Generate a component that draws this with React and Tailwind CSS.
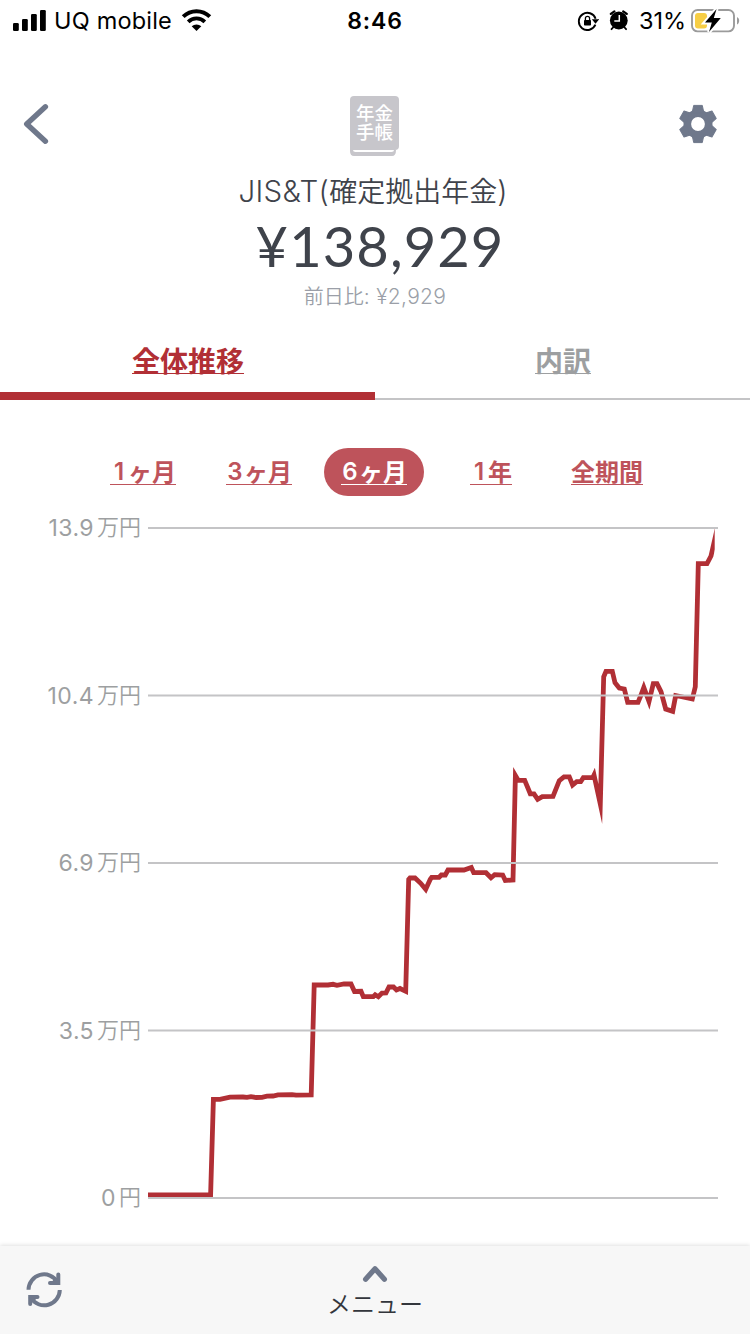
import React, { useState } from 'react';

const TABS = [
  { id: 'total', label: '全体推移' },
  { id: 'detail', label: '内訳' },
];

const RANGES = [
  { id: '1m', num: '1', label: 'ヶ月', box: 'w-[100px] mr-4' },
  { id: '3m', num: '3', label: 'ヶ月', box: 'w-[100px] mr-[15px]' },
  { id: '6m', num: '6', label: 'ヶ月', box: 'w-[100px] mr-4' },
  { id: '1y', num: '1', label: '年', box: 'w-[102px] mr-[15px]' },
  { id: 'all', num: '', label: '全期間', box: 'w-[100px]' },
];

const Y_LABELS = [
  { num: '13.9', unit: '万円' },
  { num: '10.4', unit: '万円' },
  { num: '6.9', unit: '万円' },
  { num: '3.5', unit: '万円' },
  { num: '0', unit: '円' },
];

const GRID_LINES = [528, 695.5, 863, 1030.5, 1198];

const POINTS = [
  [148, 1195], [210.6, 1195], [213.4, 1099.4], [220, 1099.4], [230, 1097.2], [243, 1097], [247, 1097.4],
  [251, 1096.6], [256, 1097.5], [262, 1097.3], [267, 1096.2], [273, 1096], [278, 1094.8], [292, 1094.6],
  [296, 1095.2], [311.2, 1095], [314.2, 985], [328, 985], [333, 984.3], [337, 985.3], [344, 984],
  [351, 984], [354.5, 991.5], [361, 991.3], [363.3, 996.7], [373.3, 996.7], [375.2, 994.8], [378.3, 996.7],
  [382, 993], [386, 992.8], [389, 987], [393.5, 987], [396.5, 990], [400, 988.5], [405.7, 991.3],
  [408.7, 879.5], [410, 878], [415, 878], [420.7, 883.3], [425.7, 889.3], [430.3, 879.3], [431.7, 877.4],
  [439, 877.4], [441.3, 875], [445.3, 875], [448, 870], [464, 870], [471.3, 867.4], [473.7, 872.7],
  [486, 872.7], [491, 877.8], [494.7, 874.7], [502.7, 875], [505.3, 880.5], [513, 880], [515.4, 775.5],
  [518.3, 780.4], [524.7, 780.4], [530.3, 793.8], [534, 793.8], [537.7, 799.3], [542.3, 796.7],
  [553, 796.3], [559.3, 780.7], [564, 776.9], [569.3, 776.9], [572.6, 785], [576.7, 781.7], [580.7, 781.7],
  [583.3, 777.7], [592.7, 777.7], [594, 775], [600.3, 804], [603.7, 676.7], [606, 671.3], [612.3, 671.3],
  [615, 682.7], [619.3, 688], [624.3, 689], [627.7, 702.3], [638, 702.3], [641, 695], [643.8, 687.5],
  [649, 701.5], [653.3, 683.7], [657, 683.7], [661, 691.7], [665.7, 709], [672.7, 711.3], [675.7, 695.5],
  [692.3, 699], [695.3, 686.7], [698.3, 563.7], [707, 563.7], [711, 556], [718, 525],
];

function StatusBar() {
  return (
    <div className="h-10 shrink-0 grid grid-cols-[1fr_auto_1fr] items-center text-black font-['Inter',sans-serif]">
      <div className="flex items-center pl-[13px]">
        <svg className="w-[33px] h-[22px]" viewBox="13 9 33 22" fill="#000">
          <rect x="13" y="22" width="5.8" height="8" rx="1.3" />
          <rect x="22" y="18" width="5.8" height="12" rx="1.3" />
          <rect x="31" y="13" width="5.8" height="17" rx="1.3" />
          <rect x="40" y="9" width="5.8" height="21" rx="1.3" />
        </svg>
        <span className="ml-2 w-[120px] pt-px text-[23.5px] leading-10 tracking-[0.2px] whitespace-nowrap">UQ mobile</span>
        <svg className="ml-[7px] w-[31px] h-[23px]" viewBox="181 9 31 23" fill="none" stroke="#000">
          <path d="M183.2 16.6a19 19 0 0 1 26.6 0" strokeWidth="4" />
          <path d="M188.2 21.8a12 12 0 0 1 16.6 0" strokeWidth="3.8" />
          <path d="M196.5 31l-4.8-4.7a7 7 0 0 1 9.600 0z" fill="#000" stroke="none" />
        </svg>
      </div>
      <div className="pt-px text-[23px] leading-10 font-semibold tracking-[0.9px]">8:46</div>
      <div className="flex items-center justify-end pr-[10px]">
        <svg className="w-[22px] h-[20px]" viewBox="577 10.5 22 20">
          <path d="M595.6 18.2A8.600 8.600 0 1 0 595.400 24.200" fill="none" stroke="#000" strokeWidth="1.9" />
          <path d="M591.8 18.800h7.400l-3.700 4.400z" fill="#000" />
          <rect x="584" y="19.4" width="7" height="5.6" rx="0.8" fill="#000" />
          <path d="M585.400 20v-2a2.100 2.100 0 0 1 4.200 0v2" fill="none" stroke="#000" strokeWidth="1.3" />
        </svg>
        <svg className="ml-[10px] w-[20px] h-[21px]" viewBox="609 9.5 20 21">
          <circle cx="618.8" cy="20" r="8.9" fill="#000" />
          <path d="M610.8 13.400l3.600-2.600M626.800 13.400l-3.600-2.600" stroke="#000" strokeWidth="2.2" strokeLinecap="round" />
          <path d="M613.5 26.500l-2 2.200M624.100 26.500l2 2.200" stroke="#000" strokeWidth="1.8" strokeLinecap="round" />
          <path d="M619.3 14.600v6h-5" fill="none" stroke="#fff" strokeWidth="1.5" />
        </svg>
        <span className="ml-[10px] w-[47px] pt-px text-[23.5px] leading-10">31%</span>
        <svg className="ml-[5px] w-[49px] h-[26px]" viewBox="691 7 49 26">
          <rect x="692" y="9" width="42" height="21.4" rx="5.6" fill="none" stroke="#9b9b9b" strokeWidth="1.9" />
          <path d="M737 16v7.600a4.400 4.400 0 0 0 0-7.600z" fill="#9b9b9b" />
          <rect x="695" y="12" width="12" height="15.4" rx="3" fill="#f7ce45" />
          <path d="M716.6 8l-11.600 13.600h6.800l-2.800 9.400 11.800-14h-7z" fill="#000" stroke="#fff" strokeWidth="4" paintOrder="stroke" />
        </svg>
      </div>
    </div>
  );
}

// Gray pension handbook used as the institution icon
function HandbookIcon() {
  return (
    <div className="w-[49px] h-[60px] flex flex-col">
      <div className="h-[54px] rounded-[4px] rounded-bl-none bg-[#c7c6cb] pt-[7px] text-center text-white text-[18.5px] leading-[19px] font-medium font-['Noto_Sans_CJK_JP',sans-serif]">
        年金
        <br />
        手帳
      </div>
      <svg className="w-[49px] h-[6px]" viewBox="0 54 49 6">
        <path d="M0 54h3q0 2 2.500 2h36q2.500 0 2.500-2h2q0 6-4 6h-38q-4 0-4-5z" fill="#c7c6cb" />
      </svg>
    </div>
  );
}

function GearIcon() {
  return (
    <svg className="w-10 h-10 mr-[9px]" viewBox="-20 -20 40 40" fill="#6f788b">
      <circle r="10.700" fill="none" stroke="#6f788b" strokeWidth="7.600" />
      {[0, 60, 120, 180, 240, 300].map((deg) => (
        <path
          key={deg}
          d="M-4.300-18.600h8.600l1.500 7.200h-11.600z"
          stroke="#6f788b"
          strokeWidth="1"
          strokeLinejoin="round"
          transform={`rotate(${deg})`}
        />
      ))}
    </svg>
  );
}

function Header() {
  return (
    <header className="h-[296px] shrink-0">
      <div className="flex justify-between pt-14 px-[23px]">
        <button type="button" aria-label="戻る" className="w-[51px] h-[56px]">
          <svg className="w-[26px] h-[56px]" viewBox="0 0 26 56" fill="none" stroke="#6f788b" strokeWidth="5.4" strokeLinecap="round" strokeLinejoin="round">
            <path d="M22.400 10.800L3.700 28l18.700 17.200" />
          </svg>
        </button>
        <HandbookIcon />
        <button type="button" aria-label="設定" className="w-[52px] h-[56px] flex items-center justify-end">
          <GearIcon />
        </button>
      </div>
      <div className="mt-[14px] text-center text-[#3f434b] font-['Inter','Noto_Sans_CJK_JP',sans-serif]">
        <h1 className="h-10 pr-1 leading-[42px] text-[28px] font-[350] whitespace-nowrap">
          <span className="text-[29.5px] font-light tracking-[0.3px]">JIS&amp;T(</span>
          確定拠出年金
          <span className="text-[29.5px] font-light">)</span>
        </h1>
        <p className="h-[70px] pl-[10px] leading-[71px] text-[56px] font-normal tracking-[1.1px] font-['Lato',sans-serif]">¥138,929</p>
        <p className="h-[30px] leading-[34px] text-[20px] font-[350] text-[#9b9fa8]">
          前日比<span className="text-[21px] font-light tracking-[0.3px]">: ¥2,929</span>
        </p>
      </div>
    </header>
  );
}

function Tabs({ active, onChange }) {
  return (
    <div className="flex h-16 shrink-0 font-['Noto_Sans_CJK_JP',sans-serif]">
      {TABS.map((tab) => (
        <button
          key={tab.id}
          type="button"
          onClick={() => onChange(tab.id)}
          className={`flex-1 flex justify-center items-start ${
            active === tab.id ? 'text-[#b12f35] border-b-8 border-[#b12f35]' : 'text-[#9d9fa1] border-b-2 border-[#c4c4c6]'
          }`}
        >
          <span className="ml-px h-[38px] text-[28px] leading-[49px] font-bold border-b border-current">{tab.label}</span>
        </button>
      ))}
    </div>
  );
}

function RangePicker({ active, onChange }) {
  return (
    <div className="flex shrink-0 mt-12 pl-[93px] h-12">
      {RANGES.map((range) => (
        <button
          key={range.id}
          type="button"
          onClick={() => onChange(range.id)}
          className={`h-12 flex justify-center items-start rounded-full ${range.box} ${
            active === range.id ? 'bg-[#be535b] text-white' : 'text-[#be535b]'
          }`}
        >
          <span className="h-[37px] flex border-b border-current text-[24px] leading-[46px] font-bold whitespace-nowrap font-['Noto_Sans_CJK_JP',sans-serif]">
            {range.num && <span className="w-[18px] pt-px text-center font-['Inter'] font-semibold">{range.num}</span>}
            {range.label}
          </span>
        </button>
      ))}
    </div>
  );
}

function Chart() {
  return (
    <div className="flex shrink-0 mt-5 h-[694px]">
      <div className="w-[141px] flex flex-col justify-between text-[#9d9fa1]">
        {Y_LABELS.map(({ num, unit }) => (
          <div key={num} className="h-6 flex justify-end items-start gap-[3px] text-[22px]">
            <span className="font-['Inter'] text-[23px] leading-6 tracking-[0.4px]">{num}</span>
            <span className="font-['Noto_Sans_CJK_JP',sans-serif] leading-[19px] font-[350]">{unit}</span>
          </div>
        ))}
      </div>
      <svg className="ml-[7px] w-[570px] h-[694px]" viewBox="148 516 570 694">
        <clipPath id="plot">
          <rect x="148" y="516" width="566.7" height="694" />
        </clipPath>
        <polyline
          points={POINTS.map((p) => p.join(',')).join(' ')}
          fill="none"
          stroke="#b12f35"
          strokeWidth="4.8"
          strokeMiterlimit="20"
          clipPath="url(#plot)"
        />
        {GRID_LINES.map((y) => (
          <line key={y} x1="148" x2="718" y1={y} y2={y} stroke="#c4c4c6" strokeWidth="2" />
        ))}
      </svg>
    </div>
  );
}

function BottomBar() {
  return (
    <footer className="mt-auto h-[88px] shrink-0 grid grid-cols-3 bg-[#f7f7f7] shadow-[0_-1px_4px_rgba(0,0,0,0.12)]">
      <button type="button" aria-label="更新" className="pl-[26px] flex items-center">
        <svg className="w-9 h-9" viewBox="26 1272 36 36" fill="none" stroke="#6f788b" strokeWidth="4">
          <path d="M28.500 1289.800A15.600 15.600 0 0 1 57.500 1282" />
          <path d="M59.800 1290A15.600 15.600 0 0 1 31 1298" />
          <path d="M58.300 1274.500v8.500H50" strokeLinecap="round" />
          <path d="M30.200 1304v-7h7.300" strokeLinecap="round" />
          <path d="M54 1279l4.500 4.500M34.500 1301l-4.500-4.500" />
        </svg>
      </button>
      <button type="button" className="flex flex-col items-center pt-[19px]">
        <svg className="w-[26px] h-[18px]" viewBox="0 0 26 18" fill="none" stroke="#6f788b" strokeWidth="5.200" strokeLinecap="round" strokeLinejoin="round">
          <path d="M3.600 14.200L13 3.700l9.400 10.500" />
        </svg>
        <span className="mt-1 text-[24px] leading-8 font-[350] text-[#33363c] font-['Noto_Sans_CJK_JP',sans-serif]">メニュー</span>
      </button>
    </footer>
  );
}

function App() {
  const [tab, setTab] = useState('total');
  const [range, setRange] = useState('6m');

  return (
    <div className="w-[750px] h-[1334px] flex flex-col overflow-hidden bg-white">
      <StatusBar />
      <Header />
      <Tabs active={tab} onChange={setTab} />
      <RangePicker active={range} onChange={setRange} />
      <Chart />
      <BottomBar />
    </div>
  );
}

export default App;
